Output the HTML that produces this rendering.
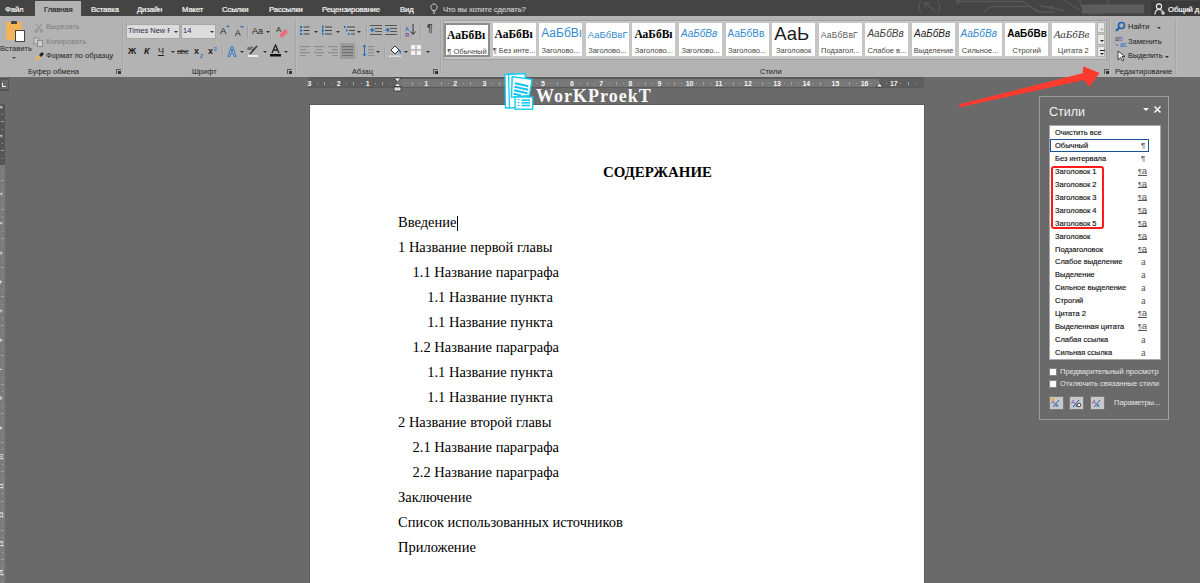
<!DOCTYPE html>
<html><head><meta charset="utf-8">
<style>
*{margin:0;padding:0;box-sizing:border-box}
html,body{width:1200px;height:583px;overflow:hidden}
body{position:relative;background:#6a6a6a;font-family:"Liberation Sans",sans-serif;color:#262626}
.a{position:absolute}
#tabs{left:0;top:0;width:1200px;height:16px;background:#444444}
.tab{position:absolute;top:5px;font-size:7.7px;line-height:10px;color:#fafafa;-webkit-text-stroke:0.2px currentColor;white-space:nowrap;letter-spacing:-0.1px}
#ribbon{left:0;top:16px;width:1200px;height:61px;background:#b3b3b3}
.sep{position:absolute;width:1px;background:#a6a6a6;box-shadow:1px 0 0 #bcbcbc}
.glabel{position:absolute;top:51px;font-size:8px;color:#303030;white-space:nowrap}
#page{left:310px;top:105px;width:614px;height:478px;background:#fff;box-shadow:0 0 0 1px #5c5c5c}
.t{position:absolute;font-size:7.5px;color:#1c1c1c;white-space:nowrap;line-height:10px}
.dd{position:absolute;width:0;height:0;border-left:2px solid transparent;border-right:2px solid transparent;border-top:2px solid #333}
.launch{position:absolute;top:53px;width:5px;height:5px;border-left:1px solid #555;border-top:1px solid #555}
.launch:after{content:"";position:absolute;left:1px;top:1px;width:3px;height:3px;background:#333}
.gi{position:absolute;top:7px;width:43px;height:33px;background:#fff;overflow:hidden}
.gs{position:absolute;left:2px;white-space:nowrap;line-height:12px}
.gl{position:absolute;left:0;top:23px;width:100%;text-align:center;font-size:7.5px;color:#444;white-space:nowrap;line-height:10px}
.sb{position:absolute;left:1097px;width:8px;height:11px;background:#e8e8e8;border:1px solid #b0b0b0}
.rn{position:absolute;top:79px;font-size:7px;font-weight:bold;color:#f4f4f4;line-height:10px;width:6px;text-align:center}
.pr{position:absolute;left:1055px;font-size:7.5px;color:#111;-webkit-text-stroke:0.15px #111;line-height:10px;white-space:nowrap}
.pi{position:absolute;font-size:8px;color:#555;line-height:10px;white-space:nowrap}
.pt{position:absolute;font-size:7.5px;color:#e6e6e6;line-height:10px;white-space:nowrap}
.doc{position:absolute;font-family:"Liberation Serif",serif;font-size:14.5px;color:#000;white-space:nowrap;line-height:1}
</style></head><body>
<div id="tabs" class="a">
  <div class="a" style="left:35px;top:1px;width:46px;height:15px;background:#b3b3b3"></div>
  <div class="tab" style="left:5px">Файл</div>
  <div class="tab" style="left:44px;color:#262626">Главная</div>
  <div class="tab" style="left:91px">Вставка</div>
  <div class="tab" style="left:137px">Дизайн</div>
  <div class="tab" style="left:182px">Макет</div>
  <div class="tab" style="left:222px">Ссылки</div>
  <div class="tab" style="left:269px">Рассылки</div>
  <div class="tab" style="left:322px">Рецензирование</div>
  <div class="tab" style="left:400px">Вид</div>
  <svg class="a" style="left:430px;top:3px" width="8" height="11" viewBox="0 0 8 11"><path d="M4 1 A3 3 0 0 1 6.5 5.8 L5.5 7.5 L2.5 7.5 L1.5 5.8 A3 3 0 0 1 4 1 Z" fill="none" stroke="#d8d8d8" stroke-width="0.9"/><path d="M2.7 9 L5.3 9 M3.2 10.3 L4.8 10.3" stroke="#d8d8d8" stroke-width="0.9"/></svg>
  <div class="tab" style="left:443px;color:#c8c8c8">Что вы хотите сделать?</div>
  <svg class="a" style="left:880px;top:0" width="280" height="16" viewBox="0 0 280 16"><g stroke="#575757" stroke-width="1.3" fill="none">
<path d="M41 1 A11 11 0 0 0 41 13"/><path d="M58 1 A11 11 0 0 1 58 13"/><path d="M45 3 L55 11 M45 3 L45 8 M45 3 L50 3"/>
<path d="M77 1.5 L143 1.5 L158 12 L175 12"/><circle cx="78" cy="1.5" r="1.6"/>
<path d="M104 12 L111 6.5 L150 6.5 L160 12"/>
<path d="M160 6 L171 7.5 L185 11"/><circle cx="171" cy="7.5" r="1.5"/>
<path d="M183 0 L200 10"/><path d="M200 0 A14 14 0 0 0 228 0"/>
</g><rect x="202" y="4.5" width="62" height="9" fill="#5c5c5c"/></svg>
<div class="a" style="left:1151px;top:1px;width:49px;height:15px;background:#3a3a3a"></div>
<svg class="a" style="left:1154px;top:3px" width="12" height="12" viewBox="0 0 12 12"><g stroke="#f2f2f2" stroke-width="1.1" fill="none"><circle cx="5" cy="3.5" r="2.6"/><path d="M0.8 11.5 Q1.5 6.5 5 6.5 Q7.5 6.5 8.5 8.5"/><path d="M9 8 L9 12 M7 10 L11 10"/></g></svg>
<div class="tab" style="left:1168px">Общий д</div>
</div>
<div id="ribbon" class="a">
 <!-- Clipboard -->
 <div class="a" style="left:6px;top:6px;width:16px;height:18px;background:#f2b45a;border-radius:1px"></div>
 <div class="a" style="left:11px;top:5px;width:6px;height:3px;background:#444;border-radius:1px 1px 0 0"></div>
 <div class="a" style="left:15px;top:14px;width:10px;height:12px;background:#fff;border:1px solid #444"></div>
 <div class="t" style="left:0px;top:28px;color:#262626">Вставить</div>
 <div class="a" style="left:12px;top:41px;width:0;height:0;border-left:2px solid transparent;border-right:2px solid transparent;border-top:2px solid #444"></div>
 <svg class="a" style="left:34px;top:7px" width="10" height="10" viewBox="0 0 10 10"><g stroke="#8c8c8c" fill="none" stroke-width="1"><line x1="2" y1="1" x2="7" y2="7"/><line x1="8" y1="1" x2="3" y2="7"/><circle cx="2.5" cy="8" r="1.3"/><circle cx="7.5" cy="8" r="1.3"/></g></svg>
 <div class="t" style="left:46px;top:6px;color:#7e7e7e">Вырезать</div>
 <svg class="a" style="left:33px;top:21px" width="11" height="10" viewBox="0 0 11 10"><g stroke="#8c8c8c" fill="#ccc" stroke-width="1"><rect x="1" y="1" width="5" height="6"/><rect x="4.5" y="3.5" width="5" height="6"/></g></svg>
 <div class="t" style="left:46px;top:21px;color:#7e7e7e">Копировать</div>
 <svg class="a" style="left:34px;top:35px" width="11" height="11" viewBox="0 0 11 11"><path d="M1 8 L5 4 L7 6 L3 10 Z" fill="#f2b45a"/><path d="M5 4 L8 1 L10 3 L7 6 Z" fill="#222"/></svg>
 <div class="t" style="left:46px;top:35px">Формат по образцу</div>
 <div class="t" style="left:28px;top:51px;color:#222">Буфер обмена</div>
 <div class="launch" style="left:116px"></div>
 <div class="sep" style="left:122px;top:3px;height:55px"></div>
 <!-- Font -->
 <div class="a" style="left:126px;top:8px;width:54px;height:15px;background:#dcdcdc;border:1px solid #a8a8a8"></div>
 <div class="a" style="left:127px;top:9px;width:43px;height:13px;overflow:hidden"><div class="t" style="left:1px;top:1px;color:#2a2a4a">Times New R</div></div>
 <div class="dd" style="left:174px;top:15px"></div>
 <div class="a" style="left:181px;top:8px;width:35px;height:15px;background:#dcdcdc;border:1px solid #a8a8a8"></div>
 <div class="t" style="left:183px;top:10px;color:#2a2a4a">14</div>
 <div class="dd" style="left:210px;top:15px"></div>
 <div class="t" style="left:220px;top:10px;font-size:9.5px;color:#222">A</div>
 <div class="a" style="left:226px;top:9px;border-left:2px solid transparent;border-right:2px solid transparent;border-bottom:2px solid #2e6fbf"></div>
 <div class="t" style="left:235px;top:12px;font-size:8.5px;color:#222">A</div>
 <div class="a" style="left:240px;top:10px;border-left:2px solid transparent;border-right:2px solid transparent;border-top:2px solid #2e6fbf"></div>
 <div class="sep" style="left:247px;top:9px;height:14px;background:#a3a3a3"></div>
 <div class="t" style="left:252px;top:10px;font-size:9px;color:#222">Aa</div>
 <div class="dd" style="left:266px;top:15px"></div>
 <div class="sep" style="left:270px;top:9px;height:14px;background:#a3a3a3"></div>
 <svg class="a" style="left:275px;top:8px" width="14" height="14" viewBox="0 0 14 14"><text x="1" y="8" font-size="8" font-family="Liberation Sans" fill="#333">A</text><path d="M4 11 L10 5 L13 8 L7 14 Z" fill="#ef6b7a"/></svg>
 <div class="t" style="left:128px;top:30px;font-size:9px;font-weight:bold;color:#1e1e1e">Ж</div>
 <div class="t" style="left:144px;top:30px;font-size:9px;font-style:italic;font-weight:bold;color:#1e1e1e">К</div>
 <div class="t" style="left:158px;top:30px;font-size:9px;color:#1e1e1e;text-decoration:underline">Ч</div>
 <div class="dd" style="left:171px;top:35px"></div>
 <div class="t" style="left:177px;top:31px;font-size:8px;color:#333;letter-spacing:-0.6px;text-decoration:line-through">abc</div>
 <div class="t" style="left:194px;top:30px;font-size:9px;font-weight:bold;color:#1e1e1e">x</div>
 <div class="t" style="left:200px;top:35px;font-size:5px;font-weight:bold;color:#2e6fbf">2</div>
 <div class="t" style="left:208px;top:30px;font-size:9px;font-weight:bold;color:#1e1e1e">x</div>
 <div class="t" style="left:214px;top:28px;font-size:5px;font-weight:bold;color:#2e6fbf">2</div>
 <div class="sep" style="left:222px;top:30px;height:13px;background:#a3a3a3"></div>
 <svg class="a" style="left:227px;top:30px" width="10" height="11" viewBox="0 0 10 11"><path d="M1 10.5 L4 0.8 L6 0.8 L9 10.5 L7.2 10.5 L6.3 7.5 L3.7 7.5 L2.8 10.5 Z M4.2 5.5 L5 2.8 L5.8 5.5 Z" stroke="#2e75c8" stroke-width="0.9" fill="none"/></svg>
 <div class="dd" style="left:240px;top:35px"></div>
 <svg class="a" style="left:247px;top:28px" width="12" height="13" viewBox="0 0 12 13"><text x="0" y="6" font-size="6" font-family="Liberation Sans" fill="#333">ab</text><path d="M3 10 L10 2" stroke="#333" stroke-width="1.5"/><rect x="1" y="11" width="10" height="2" fill="#eee"/></svg>
 <div class="dd" style="left:263px;top:35px"></div>
 <svg class="a" style="left:270px;top:28px" width="11" height="13" viewBox="0 0 11 13"><path d="M2 9 L5.5 1 L9 9 M3.5 6 L7.5 6" stroke="#222" stroke-width="1.3" fill="none"/><rect x="0" y="10" width="11" height="2.5" fill="#111"/></svg>
 <div class="dd" style="left:284px;top:35px"></div>
 <div class="t" style="left:192px;top:51px;color:#222">Шрифт</div>
 <div class="launch" style="left:287px"></div>
 <div class="sep" style="left:295px;top:3px;height:55px"></div>
 <!-- Paragraph -->
 <svg class="a" style="left:300px;top:9px" width="10" height="10" viewBox="0 0 10 10"><g fill="#1e6fc0"><rect x="0" y="1" width="2" height="2"/><rect x="0" y="4.5" width="2" height="2"/><rect x="0" y="8" width="2" height="2"/></g><g fill="#444"><rect x="3.5" y="1.5" width="6" height="1"/><rect x="3.5" y="5" width="6" height="1"/><rect x="3.5" y="8.5" width="6" height="1"/></g></svg>
 <div class="dd" style="left:314px;top:15px"></div>
 <svg class="a" style="left:322px;top:9px" width="10" height="10" viewBox="0 0 10 10"><g fill="#1e6fc0"><rect x="0" y="0.5" width="1.5" height="3"/><rect x="0" y="4" width="1.5" height="3"/><rect x="0" y="7.5" width="1.5" height="2.5"/></g><g fill="#444"><rect x="3" y="1.5" width="7" height="1"/><rect x="3" y="5" width="7" height="1"/><rect x="3" y="8.5" width="7" height="1"/></g></svg>
 <div class="dd" style="left:336px;top:15px"></div>
 <svg class="a" style="left:344px;top:9px" width="11" height="11" viewBox="0 0 11 11"><g fill="#1e6fc0"><rect x="0" y="1" width="1.5" height="2"/><rect x="2" y="4.5" width="1.5" height="2"/><rect x="4" y="8" width="1.5" height="2"/></g><g fill="#444"><rect x="3" y="1.5" width="8" height="1"/><rect x="5" y="5" width="6" height="1"/><rect x="7" y="8.5" width="4" height="1"/></g></svg>
 <div class="dd" style="left:357px;top:15px"></div>
 <div class="sep" style="left:366px;top:9px;height:14px;background:#a3a3a3"></div>
 <svg class="a" style="left:370px;top:9px" width="12" height="11" viewBox="0 0 12 11"><g fill="#555"><rect x="0" y="0" width="12" height="1"/><rect x="5" y="3" width="7" height="1"/><rect x="5" y="6" width="7" height="1"/><rect x="0" y="9" width="12" height="1"/></g><path d="M0 5 L3 2.5 L3 7.5 Z M3 4.5 L5 4.5 L5 5.5 L3 5.5Z" fill="#1e6fc0"/></svg>
 <svg class="a" style="left:385px;top:9px" width="12" height="11" viewBox="0 0 12 11"><g fill="#555"><rect x="0" y="0" width="12" height="1"/><rect x="5" y="3" width="7" height="1"/><rect x="5" y="6" width="7" height="1"/><rect x="0" y="9" width="12" height="1"/></g><path d="M5 5 L2 2.5 L2 7.5 Z M0 4.5 L2 4.5 L2 5.5 L0 5.5Z" fill="#1e6fc0"/></svg>
 <div class="sep" style="left:400px;top:9px;height:14px;background:#a3a3a3"></div>
 <div class="t" style="left:405px;top:8px;font-size:5.5px;font-weight:bold;color:#1e6fc0">А</div>
 <div class="t" style="left:405px;top:14px;font-size:5.5px;font-weight:bold;color:#8a3fb0">Я</div>
 <svg class="a" style="left:410px;top:8px" width="6" height="12" viewBox="0 0 6 12"><path d="M3 0 L3 10 M0.5 7.5 L3 10.5 L5.5 7.5" stroke="#333" stroke-width="1" fill="none"/></svg>
 <div class="sep" style="left:420px;top:9px;height:14px;background:#a3a3a3"></div>
 <div class="t" style="left:427px;top:8px;font-size:10px;font-weight:bold;color:#444">¶</div>
 <!-- row 2 -->
 <svg class="a" style="left:300px;top:30px" width="10" height="10" viewBox="0 0 10 10"><g fill="#8e8e8e"><rect x="0" y="0" width="10" height="1.2"/><rect x="0" y="3" width="6" height="1.2"/><rect x="0" y="6" width="10" height="1.2"/><rect x="0" y="9" width="6" height="1"/></g></svg>
 <svg class="a" style="left:314px;top:30px" width="10" height="10" viewBox="0 0 10 10"><g fill="#8e8e8e"><rect x="0" y="0" width="10" height="1.2"/><rect x="2" y="3" width="6" height="1.2"/><rect x="0" y="6" width="10" height="1.2"/><rect x="2" y="9" width="6" height="1"/></g></svg>
 <svg class="a" style="left:328px;top:30px" width="10" height="10" viewBox="0 0 10 10"><g fill="#8e8e8e"><rect x="0" y="0" width="10" height="1.2"/><rect x="4" y="3" width="6" height="1.2"/><rect x="0" y="6" width="10" height="1.2"/><rect x="4" y="9" width="6" height="1"/></g></svg>
 <div class="a" style="left:340px;top:27px;width:15px;height:16px;background:#9c9c9c"></div>
 <svg class="a" style="left:342px;top:30px" width="11" height="10" viewBox="0 0 11 10"><g fill="#6e6e6e"><rect x="0" y="0" width="11" height="1.2"/><rect x="0" y="3" width="11" height="1.2"/><rect x="0" y="6" width="11" height="1.2"/><rect x="0" y="9" width="11" height="1"/></g></svg>
 <div class="sep" style="left:357px;top:29px;height:14px;background:#a3a3a3"></div>
 <svg class="a" style="left:362px;top:28px" width="12" height="13" viewBox="0 0 12 13"><path d="M2.5 0.5 L0.5 3 L4.5 3 Z M2.5 12.5 L0.5 10 L4.5 10 Z" fill="#1e6fc0"/><rect x="2" y="3" width="1" height="7" fill="#1e6fc0"/><g fill="#8e8e8e"><rect x="6" y="2" width="6" height="1.2"/><rect x="6" y="5" width="6" height="1.2"/><rect x="6" y="8" width="6" height="1.2"/><rect x="6" y="11" width="6" height="1"/></g></svg>
 <div class="dd" style="left:376px;top:35px"></div>
 <div class="sep" style="left:384px;top:29px;height:14px;background:#a3a3a3"></div>
 <svg class="a" style="left:389px;top:28px" width="13" height="13" viewBox="0 0 13 13"><path d="M2 6 L6 2 L10 6 L6 10 Z" fill="#fff" stroke="#333" stroke-width="1"/><path d="M10 6 Q12 8 11 9" stroke="#1e6fc0" stroke-width="1.5" fill="none"/><rect x="0" y="11.5" width="12" height="1.5" fill="#ddd"/></svg>
 <div class="dd" style="left:404px;top:35px"></div>
 <svg class="a" style="left:411px;top:29px" width="10" height="10" viewBox="0 0 10 10"><rect x="0" y="0" width="10" height="10" fill="#f2f2f2"/><g fill="#9a9a9a"><rect x="4.5" y="0" width="1" height="10"/><rect x="0" y="4.5" width="10" height="1"/></g></svg>
 <div class="dd" style="left:426px;top:35px"></div>
 <div class="t" style="left:352px;top:51px;color:#222">Абзац</div>
 <div class="launch" style="left:433px"></div>
 <div class="sep" style="left:440px;top:3px;height:55px"></div>
 <!-- Styles gallery -->
 <div class="a" style="left:443px;top:4px;width:664px;height:40px;background:#c6c6c6;border:1px solid #a0a0a0"></div>
 <div class="gi" style="left:444.0px;top:7px;width:46px;height:34px;border:2px solid #8e8e8e"><div class="gs" style="font-family:'Liberation Serif';font-weight:bold;font-size:11.5px;color:#000;top:3.5px;left:1px">АаБбВı</div><div class="gl" style="top:22px">¶ Обычный</div></div>
 <div class="gi" style="left:492.6px"><div class="gs" style="font-family:'Liberation Serif';font-weight:bold;font-size:11.5px;color:#000;top:4.5px">АаБбВı</div><div class="gl">¶ Без инте...</div></div>
 <div class="gi" style="left:539.2px"><div class="gs" style="font-size:12px;color:#3489cf;top:3.5px">АаБбВı</div><div class="gl">Заголово...</div></div>
 <div class="gi" style="left:585.8px"><div class="gs" style="font-size:9.5px;color:#3489cf;top:5.5px">АаБбВвГ</div><div class="gl">Заголово...</div></div>
 <div class="gi" style="left:632.4px"><div class="gs" style="font-family:'Liberation Serif';font-weight:bold;font-size:11.5px;color:#000;top:4.5px">АаБбВı</div><div class="gl">Заголово...</div></div>
 <div class="gi" style="left:679.0px"><div class="gs" style="font-size:10px;font-style:italic;color:#3489cf;top:4.5px">АаБбВв</div><div class="gl">Заголово...</div></div>
 <div class="gi" style="left:725.6px"><div class="gs" style="font-size:10px;color:#3489cf;top:4.5px">АаБбВв</div><div class="gl">Заголово...</div></div>
 <div class="gi" style="left:772.2px"><div class="gs" style="font-size:18.5px;color:#1a1a1a;font-weight:normal;line-height:18px;top:1.5px">АаЬ</div><div class="gl">Заголовок</div></div>
 <div class="gi" style="left:818.8px"><div class="gs" style="font-size:8.5px;color:#5a5a5a;letter-spacing:0.2px;top:5.5px">АаБбВвГ</div><div class="gl">Подзагол...</div></div>
 <div class="gi" style="left:865.4px"><div class="gs" style="font-size:10px;font-style:italic;color:#404040;top:4.5px">АаБбВв</div><div class="gl">Слабое в...</div></div>
 <div class="gi" style="left:912.0px"><div class="gs" style="font-size:10px;font-style:italic;color:#1a1a1a;top:4.5px">АаБбВв</div><div class="gl">Выделение</div></div>
 <div class="gi" style="left:958.6px"><div class="gs" style="font-size:10px;font-style:italic;color:#3489cf;top:4.5px">АаБбВв</div><div class="gl">Сильное...</div></div>
 <div class="gi" style="left:1005.2px"><div class="gs" style="font-size:10px;font-weight:bold;color:#000;top:4.5px">АаБбВв</div><div class="gl">Строгий</div></div>
 <div class="gi" style="left:1051.8px"><div class="gs" style="font-family:'Liberation Serif';font-size:11px;font-style:italic;color:#404040;top:4.5px">АаБбВв</div><div class="gl">Цитата 2</div></div>
 <div class="a" style="left:1097px;top:6px;width:9px;height:37px;background:#c6c6c6"></div>
 <div class="sb" style="top:6px"><div class="a" style="left:2px;top:5px;border-left:2px solid transparent;border-right:2px solid transparent;border-bottom:2px solid #aaa"></div></div>
 <div class="sb" style="top:18px"><div class="a" style="left:2px;top:5px;border-left:2px solid transparent;border-right:2px solid transparent;border-top:2.5px solid #222"></div></div>
 <div class="sb" style="top:30px"><div class="a" style="left:2px;top:3px;width:5px;height:1px;background:#222"></div><div class="a" style="left:2px;top:6px;border-left:2.5px solid transparent;border-right:2.5px solid transparent;border-top:2.5px solid #222"></div></div>
 <div class="t" style="left:760px;top:51px;color:#222">Стили</div>
 <div class="launch" style="left:1104px"></div>
 <div class="sep" style="left:1109px;top:3px;height:55px"></div>
 <!-- Editing -->
 <svg class="a" style="left:1115px;top:5px" width="11" height="11" viewBox="0 0 11 11"><circle cx="6.5" cy="4.5" r="3" stroke="#1e5fb0" stroke-width="1.6" fill="none"/><path d="M4.5 6.5 L1 10" stroke="#1e5fb0" stroke-width="2"/></svg>
 <div class="t" style="left:1128px;top:6px">Найти</div>
 <div class="dd" style="left:1157px;top:11px"></div>
 <svg class="a" style="left:1115px;top:19px" width="13" height="13" viewBox="0 0 13 13"><text x="0" y="6" font-size="6.5" font-family="Liberation Sans" fill="#444">a</text><text x="4" y="5.5" font-size="6.5" font-family="Liberation Sans" fill="#7a3fb0">b</text><text x="5" y="12" font-size="6.5" font-family="Liberation Sans" fill="#1e6fc0">ac</text><path d="M1 9 L3 11" stroke="#1e6fc0" stroke-width="1"/></svg>
 <div class="t" style="left:1128px;top:21px">Заменить</div>
 <svg class="a" style="left:1117px;top:34px" width="9" height="12" viewBox="0 0 9 12"><path d="M1 1 L1 10 L3.5 7.5 L5.5 11 L7 10 L5 6.5 L8 6.5 Z" fill="#f4f4f4" stroke="#333" stroke-width="0.9"/></svg>
 <div class="t" style="left:1128px;top:35px">Выделить</div>
 <div class="dd" style="left:1165px;top:40px"></div>
 <div class="t" style="left:1115px;top:51px;color:#222">Редактирование</div>
 <div class="sep" style="left:1175px;top:3px;height:55px"></div>
</div>
<!-- tab selector & vertical ruler -->
<div class="a" style="left:0;top:78px;width:9px;height:13px;background:#555"></div>
<div class="a" style="left:1px;top:80px;width:7px;height:9px;background:#6a6a6a"></div>
<div class="a" style="left:2px;top:83px;width:1px;height:4px;background:#eee"></div>
<div class="a" style="left:2px;top:86px;width:4px;height:1px;background:#eee"></div>
<div class="a" style="left:0;top:104px;width:5px;height:61px;background:#555"></div>
<div class="a" style="left:0;top:165px;width:5px;height:418px;background:#7b7b7b"></div>
<div class="a" style="left:-2px;top:103.7px;font-size:6px;font-weight:bold;color:#e8e8e8;transform:rotate(-90deg);line-height:6px">2</div>
<div class="a" style="left:2px;top:114.0px;width:1px;height:1px;background:#a4a4a4"></div>
<div class="a" style="left:1px;top:121.2px;width:3px;height:1px;background:#a4a4a4"></div>
<div class="a" style="left:2px;top:128.5px;width:1px;height:1px;background:#a4a4a4"></div>
<div class="a" style="left:-2px;top:132.8px;font-size:6px;font-weight:bold;color:#e8e8e8;transform:rotate(-90deg);line-height:6px">1</div>
<div class="a" style="left:2px;top:143.1px;width:1px;height:1px;background:#a4a4a4"></div>
<div class="a" style="left:1px;top:150.4px;width:3px;height:1px;background:#a4a4a4"></div>
<div class="a" style="left:2px;top:157.7px;width:1px;height:1px;background:#a4a4a4"></div>
<div class="a" style="left:2px;top:172.3px;width:1px;height:1px;background:#a4a4a4"></div>
<div class="a" style="left:1px;top:179.6px;width:3px;height:1px;background:#a4a4a4"></div>
<div class="a" style="left:2px;top:186.9px;width:1px;height:1px;background:#a4a4a4"></div>
<div class="a" style="left:-2px;top:191.2px;font-size:6px;font-weight:bold;color:#e8e8e8;transform:rotate(-90deg);line-height:6px">1</div>
<div class="a" style="left:2px;top:201.5px;width:1px;height:1px;background:#a4a4a4"></div>
<div class="a" style="left:1px;top:208.8px;width:3px;height:1px;background:#a4a4a4"></div>
<div class="a" style="left:2px;top:216.0px;width:1px;height:1px;background:#a4a4a4"></div>
<div class="a" style="left:-2px;top:220.3px;font-size:6px;font-weight:bold;color:#e8e8e8;transform:rotate(-90deg);line-height:6px">2</div>
<div class="a" style="left:2px;top:230.6px;width:1px;height:1px;background:#a4a4a4"></div>
<div class="a" style="left:1px;top:237.9px;width:3px;height:1px;background:#a4a4a4"></div>
<div class="a" style="left:2px;top:245.2px;width:1px;height:1px;background:#a4a4a4"></div>
<div class="a" style="left:-2px;top:249.5px;font-size:6px;font-weight:bold;color:#e8e8e8;transform:rotate(-90deg);line-height:6px">3</div>
<div class="a" style="left:2px;top:259.8px;width:1px;height:1px;background:#a4a4a4"></div>
<div class="a" style="left:1px;top:267.1px;width:3px;height:1px;background:#a4a4a4"></div>
<div class="a" style="left:2px;top:274.4px;width:1px;height:1px;background:#a4a4a4"></div>
<div class="a" style="left:-2px;top:278.7px;font-size:6px;font-weight:bold;color:#e8e8e8;transform:rotate(-90deg);line-height:6px">4</div>
<div class="a" style="left:2px;top:289.0px;width:1px;height:1px;background:#a4a4a4"></div>
<div class="a" style="left:1px;top:296.3px;width:3px;height:1px;background:#a4a4a4"></div>
<div class="a" style="left:2px;top:303.6px;width:1px;height:1px;background:#a4a4a4"></div>
<div class="a" style="left:-2px;top:307.9px;font-size:6px;font-weight:bold;color:#e8e8e8;transform:rotate(-90deg);line-height:6px">5</div>
<div class="a" style="left:2px;top:318.1px;width:1px;height:1px;background:#a4a4a4"></div>
<div class="a" style="left:1px;top:325.4px;width:3px;height:1px;background:#a4a4a4"></div>
<div class="a" style="left:2px;top:332.7px;width:1px;height:1px;background:#a4a4a4"></div>
<div class="a" style="left:-2px;top:337.0px;font-size:6px;font-weight:bold;color:#e8e8e8;transform:rotate(-90deg);line-height:6px">6</div>
<div class="a" style="left:2px;top:347.3px;width:1px;height:1px;background:#a4a4a4"></div>
<div class="a" style="left:1px;top:354.6px;width:3px;height:1px;background:#a4a4a4"></div>
<div class="a" style="left:2px;top:361.9px;width:1px;height:1px;background:#a4a4a4"></div>
<div class="a" style="left:-2px;top:366.2px;font-size:6px;font-weight:bold;color:#e8e8e8;transform:rotate(-90deg);line-height:6px">7</div>
<div class="a" style="left:2px;top:376.5px;width:1px;height:1px;background:#a4a4a4"></div>
<div class="a" style="left:1px;top:383.8px;width:3px;height:1px;background:#a4a4a4"></div>
<div class="a" style="left:2px;top:391.1px;width:1px;height:1px;background:#a4a4a4"></div>
<div class="a" style="left:-2px;top:395.4px;font-size:6px;font-weight:bold;color:#e8e8e8;transform:rotate(-90deg);line-height:6px">8</div>
<div class="a" style="left:2px;top:405.7px;width:1px;height:1px;background:#a4a4a4"></div>
<div class="a" style="left:1px;top:412.9px;width:3px;height:1px;background:#a4a4a4"></div>
<div class="a" style="left:2px;top:420.2px;width:1px;height:1px;background:#a4a4a4"></div>
<div class="a" style="left:-2px;top:424.5px;font-size:6px;font-weight:bold;color:#e8e8e8;transform:rotate(-90deg);line-height:6px">9</div>
<div class="a" style="left:2px;top:434.8px;width:1px;height:1px;background:#a4a4a4"></div>
<div class="a" style="left:1px;top:442.1px;width:3px;height:1px;background:#a4a4a4"></div>
<div class="a" style="left:2px;top:449.4px;width:1px;height:1px;background:#a4a4a4"></div>
<div class="a" style="left:-2px;top:453.7px;font-size:6px;font-weight:bold;color:#e8e8e8;transform:rotate(-90deg);line-height:6px">10</div>
<div class="a" style="left:2px;top:464.0px;width:1px;height:1px;background:#a4a4a4"></div>
<div class="a" style="left:1px;top:471.3px;width:3px;height:1px;background:#a4a4a4"></div>
<div class="a" style="left:2px;top:478.6px;width:1px;height:1px;background:#a4a4a4"></div>
<div class="a" style="left:-2px;top:482.9px;font-size:6px;font-weight:bold;color:#e8e8e8;transform:rotate(-90deg);line-height:6px">11</div>
<div class="a" style="left:2px;top:493.2px;width:1px;height:1px;background:#a4a4a4"></div>
<div class="a" style="left:1px;top:500.5px;width:3px;height:1px;background:#a4a4a4"></div>
<div class="a" style="left:2px;top:507.7px;width:1px;height:1px;background:#a4a4a4"></div>
<div class="a" style="left:-2px;top:512.0px;font-size:6px;font-weight:bold;color:#e8e8e8;transform:rotate(-90deg);line-height:6px">12</div>
<div class="a" style="left:2px;top:522.3px;width:1px;height:1px;background:#a4a4a4"></div>
<div class="a" style="left:1px;top:529.6px;width:3px;height:1px;background:#a4a4a4"></div>
<div class="a" style="left:2px;top:536.9px;width:1px;height:1px;background:#a4a4a4"></div>
<div class="a" style="left:-2px;top:541.2px;font-size:6px;font-weight:bold;color:#e8e8e8;transform:rotate(-90deg);line-height:6px">13</div>
<div class="a" style="left:2px;top:551.5px;width:1px;height:1px;background:#a4a4a4"></div>
<div class="a" style="left:1px;top:558.8px;width:3px;height:1px;background:#a4a4a4"></div>
<div class="a" style="left:2px;top:566.1px;width:1px;height:1px;background:#a4a4a4"></div>
<div class="a" style="left:-2px;top:570.4px;font-size:6px;font-weight:bold;color:#e8e8e8;transform:rotate(-90deg);line-height:6px">14</div>
<div class="a" style="left:2px;top:580.7px;width:1px;height:1px;background:#a4a4a4"></div>
<!-- horizontal ruler -->
<div class="a" style="left:308px;top:77px;width:616px;height:11px;background:#5a5a5a"></div>
<div class="a" style="left:308px;top:79px;width:616px;height:8px;background:#5e5e5e"></div>
<div class="a" style="left:397px;top:79px;width:482px;height:8px;background:#777777"></div>
<div class="rn" style="left:306.5px">3</div>
<div class="rn" style="left:335.7px">2</div>
<div class="rn" style="left:364.8px">1</div>
<div class="rn" style="left:423.2px">1</div>
<div class="rn" style="left:452.3px">2</div>
<div class="rn" style="left:481.5px">3</div>
<div class="rn" style="left:510.7px">4</div>
<div class="rn" style="left:539.9px">5</div>
<div class="rn" style="left:569.0px">6</div>
<div class="rn" style="left:598.2px">7</div>
<div class="rn" style="left:627.4px">8</div>
<div class="rn" style="left:656.5px">9</div>
<div class="rn" style="left:685.7px">10</div>
<div class="rn" style="left:714.9px">11</div>
<div class="rn" style="left:744.0px">12</div>
<div class="rn" style="left:773.2px">13</div>
<div class="rn" style="left:802.4px">14</div>
<div class="rn" style="left:831.5px">15</div>
<div class="rn" style="left:860.7px">16</div>
<div class="rn" style="left:889.9px">17</div>
<div class="a" style="left:316.8px;top:83px;width:1px;height:1px;background:#a4a4a4"></div>
<div class="a" style="left:324.1px;top:82px;width:1px;height:3px;background:#a4a4a4"></div>
<div class="a" style="left:331.4px;top:83px;width:1px;height:1px;background:#a4a4a4"></div>
<div class="a" style="left:346.0px;top:83px;width:1px;height:1px;background:#a4a4a4"></div>
<div class="a" style="left:353.2px;top:82px;width:1px;height:3px;background:#a4a4a4"></div>
<div class="a" style="left:360.5px;top:83px;width:1px;height:1px;background:#a4a4a4"></div>
<div class="a" style="left:375.1px;top:83px;width:1px;height:1px;background:#a4a4a4"></div>
<div class="a" style="left:382.4px;top:82px;width:1px;height:3px;background:#a4a4a4"></div>
<div class="a" style="left:389.7px;top:83px;width:1px;height:1px;background:#a4a4a4"></div>
<div class="a" style="left:404.3px;top:83px;width:1px;height:1px;background:#a4a4a4"></div>
<div class="a" style="left:411.6px;top:82px;width:1px;height:3px;background:#a4a4a4"></div>
<div class="a" style="left:418.9px;top:83px;width:1px;height:1px;background:#a4a4a4"></div>
<div class="a" style="left:433.5px;top:83px;width:1px;height:1px;background:#a4a4a4"></div>
<div class="a" style="left:440.8px;top:82px;width:1px;height:3px;background:#a4a4a4"></div>
<div class="a" style="left:448.0px;top:83px;width:1px;height:1px;background:#a4a4a4"></div>
<div class="a" style="left:462.6px;top:83px;width:1px;height:1px;background:#a4a4a4"></div>
<div class="a" style="left:469.9px;top:82px;width:1px;height:3px;background:#a4a4a4"></div>
<div class="a" style="left:477.2px;top:83px;width:1px;height:1px;background:#a4a4a4"></div>
<div class="a" style="left:491.8px;top:83px;width:1px;height:1px;background:#a4a4a4"></div>
<div class="a" style="left:499.1px;top:82px;width:1px;height:3px;background:#a4a4a4"></div>
<div class="a" style="left:506.4px;top:83px;width:1px;height:1px;background:#a4a4a4"></div>
<div class="a" style="left:521.0px;top:83px;width:1px;height:1px;background:#a4a4a4"></div>
<div class="a" style="left:528.3px;top:82px;width:1px;height:3px;background:#a4a4a4"></div>
<div class="a" style="left:535.6px;top:83px;width:1px;height:1px;background:#a4a4a4"></div>
<div class="a" style="left:550.1px;top:83px;width:1px;height:1px;background:#a4a4a4"></div>
<div class="a" style="left:557.4px;top:82px;width:1px;height:3px;background:#a4a4a4"></div>
<div class="a" style="left:564.7px;top:83px;width:1px;height:1px;background:#a4a4a4"></div>
<div class="a" style="left:579.3px;top:83px;width:1px;height:1px;background:#a4a4a4"></div>
<div class="a" style="left:586.6px;top:82px;width:1px;height:3px;background:#a4a4a4"></div>
<div class="a" style="left:593.9px;top:83px;width:1px;height:1px;background:#a4a4a4"></div>
<div class="a" style="left:608.5px;top:83px;width:1px;height:1px;background:#a4a4a4"></div>
<div class="a" style="left:615.8px;top:82px;width:1px;height:3px;background:#a4a4a4"></div>
<div class="a" style="left:623.1px;top:83px;width:1px;height:1px;background:#a4a4a4"></div>
<div class="a" style="left:637.7px;top:83px;width:1px;height:1px;background:#a4a4a4"></div>
<div class="a" style="left:644.9px;top:82px;width:1px;height:3px;background:#a4a4a4"></div>
<div class="a" style="left:652.2px;top:83px;width:1px;height:1px;background:#a4a4a4"></div>
<div class="a" style="left:666.8px;top:83px;width:1px;height:1px;background:#a4a4a4"></div>
<div class="a" style="left:674.1px;top:82px;width:1px;height:3px;background:#a4a4a4"></div>
<div class="a" style="left:681.4px;top:83px;width:1px;height:1px;background:#a4a4a4"></div>
<div class="a" style="left:696.0px;top:83px;width:1px;height:1px;background:#a4a4a4"></div>
<div class="a" style="left:703.3px;top:82px;width:1px;height:3px;background:#a4a4a4"></div>
<div class="a" style="left:710.6px;top:83px;width:1px;height:1px;background:#a4a4a4"></div>
<div class="a" style="left:725.2px;top:83px;width:1px;height:1px;background:#a4a4a4"></div>
<div class="a" style="left:732.5px;top:82px;width:1px;height:3px;background:#a4a4a4"></div>
<div class="a" style="left:739.7px;top:83px;width:1px;height:1px;background:#a4a4a4"></div>
<div class="a" style="left:754.3px;top:83px;width:1px;height:1px;background:#a4a4a4"></div>
<div class="a" style="left:761.6px;top:82px;width:1px;height:3px;background:#a4a4a4"></div>
<div class="a" style="left:768.9px;top:83px;width:1px;height:1px;background:#a4a4a4"></div>
<div class="a" style="left:783.5px;top:83px;width:1px;height:1px;background:#a4a4a4"></div>
<div class="a" style="left:790.8px;top:82px;width:1px;height:3px;background:#a4a4a4"></div>
<div class="a" style="left:798.1px;top:83px;width:1px;height:1px;background:#a4a4a4"></div>
<div class="a" style="left:812.7px;top:83px;width:1px;height:1px;background:#a4a4a4"></div>
<div class="a" style="left:820.0px;top:82px;width:1px;height:3px;background:#a4a4a4"></div>
<div class="a" style="left:827.3px;top:83px;width:1px;height:1px;background:#a4a4a4"></div>
<div class="a" style="left:841.8px;top:83px;width:1px;height:1px;background:#a4a4a4"></div>
<div class="a" style="left:849.1px;top:82px;width:1px;height:3px;background:#a4a4a4"></div>
<div class="a" style="left:856.4px;top:83px;width:1px;height:1px;background:#a4a4a4"></div>
<div class="a" style="left:871.0px;top:83px;width:1px;height:1px;background:#a4a4a4"></div>
<div class="a" style="left:878.3px;top:82px;width:1px;height:3px;background:#a4a4a4"></div>
<div class="a" style="left:885.6px;top:83px;width:1px;height:1px;background:#a4a4a4"></div>
<div class="a" style="left:900.2px;top:83px;width:1px;height:1px;background:#a4a4a4"></div>
<div class="a" style="left:907.5px;top:82px;width:1px;height:3px;background:#a4a4a4"></div>
<div class="a" style="left:914.8px;top:83px;width:1px;height:1px;background:#a4a4a4"></div>
<svg class="a" style="left:392px;top:77px" width="11" height="15" viewBox="0 0 11 15"><path d="M2 1 L9 1 L5.5 5 Z" fill="#eee" stroke="#333" stroke-width="0.8"/><path d="M5.5 6 L9 9.5 L2 9.5 Z" fill="#eee" stroke="#333" stroke-width="0.8"/><rect x="2" y="10" width="7" height="4" fill="#ddd" stroke="#333" stroke-width="0.8"/></svg>
<svg class="a" style="left:874px;top:82px" width="11" height="8" viewBox="0 0 11 8"><path d="M5.5 1 L9 5 L2 5 Z" fill="#eee" stroke="#333" stroke-width="0.8"/></svg>
<!-- page -->
<div id="page" class="a">
 <div class="doc" style="left:293px;top:60px;font-weight:bold;font-size:14.9px">СОДЕРЖАНИЕ</div>
 <div class="doc" style="left:88.0px;top:110px">Введение</div>
 <div class="doc" style="left:88.0px;top:135px">1 Название первой главы</div>
 <div class="doc" style="left:102.6px;top:160px">1.1 Название параграфа</div>
 <div class="doc" style="left:117.2px;top:185px">1.1 Название пункта</div>
 <div class="doc" style="left:117.2px;top:210px">1.1 Название пункта</div>
 <div class="doc" style="left:102.6px;top:235px">1.2 Название параграфа</div>
 <div class="doc" style="left:117.2px;top:260px">1.1 Название пункта</div>
 <div class="doc" style="left:117.2px;top:285px">1.1 Название пункта</div>
 <div class="doc" style="left:88.0px;top:310px">2 Название второй главы</div>
 <div class="doc" style="left:102.6px;top:335px">2.1 Название параграфа</div>
 <div class="doc" style="left:102.6px;top:360px">2.2 Название параграфа</div>
 <div class="doc" style="left:88.0px;top:385px">Заключение</div>
 <div class="doc" style="left:88.0px;top:410px">Список использованных источников</div>
 <div class="doc" style="left:88.0px;top:435px">Приложение</div>
 <div class="a" style="left:147px;top:111px;width:1px;height:15px;background:#000"></div>
</div>
<div class="a" style="left:1039px;top:96px;width:130px;height:324px;border:1px solid #9a9a9a;border-right-color:#a4a4a4"></div>
<div class="a" style="left:1049px;top:104px;font-size:12.5px;color:#f2f2f2;line-height:16px;white-space:nowrap">Стили</div>
<div class="a" style="left:1143px;top:107.5px;border-left:3px solid transparent;border-right:3px solid transparent;border-top:3px solid #f4f4f4"></div>
<svg class="a" style="left:1153px;top:105px" width="9" height="9" viewBox="0 0 9 9"><path d="M1.5 1.5 L7.5 7.5 M7.5 1.5 L1.5 7.5" stroke="#f4f4f4" stroke-width="1.6"/></svg>
<div class="a" style="left:1049px;top:125px;width:112px;height:235px;background:#fff;border:1px solid #a8a8a8"></div>
<div class="a" style="left:1050px;top:139px;width:99px;height:13px;border:1.6px solid #1a5298"></div>
<div class="a" style="left:1051px;top:166px;width:53px;height:63px;border:2px solid #ff1a1a;border-radius:3px"></div>
<div class="pr" style="top:128.2px">Очистить все</div>
<div class="pr" style="top:141.1px">Обычный</div>
<div class="pi" style="top:141.1px;left:1141px">¶</div>
<div class="pr" style="top:154.0px">Без интервала</div>
<div class="pi" style="top:154.0px;left:1141px">¶</div>
<div class="pr" style="top:167.0px">Заголовок 1</div>
<div class="pi" style="top:165.0px;left:1138px;font-size:7px;line-height:11px">¶<span style="font-size:9.5px">a</span></div><div class="a" style="left:1138px;top:174.5px;width:9px;height:1px;background:#555"></div>
<div class="pr" style="top:179.9px">Заголовок 2</div>
<div class="pi" style="top:177.9px;left:1138px;font-size:7px;line-height:11px">¶<span style="font-size:9.5px">a</span></div><div class="a" style="left:1138px;top:187.4px;width:9px;height:1px;background:#555"></div>
<div class="pr" style="top:192.8px">Заголовок 3</div>
<div class="pi" style="top:190.8px;left:1138px;font-size:7px;line-height:11px">¶<span style="font-size:9.5px">a</span></div><div class="a" style="left:1138px;top:200.3px;width:9px;height:1px;background:#555"></div>
<div class="pr" style="top:205.7px">Заголовок 4</div>
<div class="pi" style="top:203.7px;left:1138px;font-size:7px;line-height:11px">¶<span style="font-size:9.5px">a</span></div><div class="a" style="left:1138px;top:213.2px;width:9px;height:1px;background:#555"></div>
<div class="pr" style="top:218.6px">Заголовок 5</div>
<div class="pi" style="top:216.6px;left:1138px;font-size:7px;line-height:11px">¶<span style="font-size:9.5px">a</span></div><div class="a" style="left:1138px;top:226.1px;width:9px;height:1px;background:#555"></div>
<div class="pr" style="top:231.6px">Заголовок</div>
<div class="pi" style="top:229.6px;left:1138px;font-size:7px;line-height:11px">¶<span style="font-size:9.5px">a</span></div><div class="a" style="left:1138px;top:239.1px;width:9px;height:1px;background:#555"></div>
<div class="pr" style="top:244.5px">Подзаголовок</div>
<div class="pi" style="top:242.5px;left:1138px;font-size:7px;line-height:11px">¶<span style="font-size:9.5px">a</span></div><div class="a" style="left:1138px;top:252.0px;width:9px;height:1px;background:#555"></div>
<div class="pr" style="top:257.4px">Слабое выделение</div>
<div class="pi" style="top:256.4px;left:1141px;font-size:10.5px;line-height:11px;font-family:'Liberation Serif'">a</div>
<div class="pr" style="top:270.3px">Выделение</div>
<div class="pi" style="top:269.3px;left:1141px;font-size:10.5px;line-height:11px;font-family:'Liberation Serif'">a</div>
<div class="pr" style="top:283.2px">Сильное выделение</div>
<div class="pi" style="top:282.2px;left:1141px;font-size:10.5px;line-height:11px;font-family:'Liberation Serif'">a</div>
<div class="pr" style="top:296.2px">Строгий</div>
<div class="pi" style="top:295.2px;left:1141px;font-size:10.5px;line-height:11px;font-family:'Liberation Serif'">a</div>
<div class="pr" style="top:309.1px">Цитата 2</div>
<div class="pi" style="top:307.1px;left:1138px;font-size:7px;line-height:11px">¶<span style="font-size:9.5px">a</span></div><div class="a" style="left:1138px;top:316.6px;width:9px;height:1px;background:#555"></div>
<div class="pr" style="top:322.0px">Выделенная цитата</div>
<div class="pi" style="top:320.0px;left:1138px;font-size:7px;line-height:11px">¶<span style="font-size:9.5px">a</span></div><div class="a" style="left:1138px;top:329.5px;width:9px;height:1px;background:#555"></div>
<div class="pr" style="top:334.9px">Слабая ссылка</div>
<div class="pi" style="top:333.9px;left:1141px;font-size:10.5px;line-height:11px;font-family:'Liberation Serif'">a</div>
<div class="pr" style="top:347.8px">Сильная ссылка</div>
<div class="pi" style="top:346.8px;left:1141px;font-size:10.5px;line-height:11px;font-family:'Liberation Serif'">a</div>
<div class="a" style="left:1049px;top:368px;width:8px;height:8px;background:#fafafa;border:1px solid #888"></div>
<div class="a" style="left:1049px;top:380px;width:8px;height:8px;background:#fafafa;border:1px solid #888"></div>
<div class="pt" style="left:1060px;top:367px">Предварительный просмотр</div>
<div class="pt" style="left:1060px;top:379px">Отключить связанные стили</div>
<div class="a" style="left:1049px;top:396px;width:15px;height:14px;background:#c8c8c8;border:1px solid #7a7a7a"></div>
<svg class="a" style="left:1051px;top:398px" width="11" height="10" viewBox="0 0 11 10"><text x="0" y="6" font-size="6" font-family="Liberation Sans" fill="#7a3fb0">A</text><text x="4" y="9" font-size="6" font-family="Liberation Sans" fill="#1e5fb0">a</text><path d="M2 9 L8 2" stroke="#1e5fb0" stroke-width="1"/><rect x="0" y="0" width="3" height="3" fill="#f0b040"/></svg>
<div class="a" style="left:1069px;top:396px;width:15px;height:14px;background:#c8c8c8;border:1px solid #7a7a7a"></div>
<svg class="a" style="left:1071px;top:398px" width="11" height="10" viewBox="0 0 11 10"><text x="0" y="6" font-size="6" font-family="Liberation Sans" fill="#7a3fb0">A</text><text x="4" y="9" font-size="6" font-family="Liberation Sans" fill="#1e5fb0">a</text><path d="M2 9 L8 2" stroke="#1e5fb0" stroke-width="1"/><circle cx="8" cy="7" r="1.8" fill="#fff" stroke="#222" stroke-width="0.8"/></svg>
<div class="a" style="left:1090px;top:396px;width:15px;height:14px;background:#c8c8c8;border:1px solid #7a7a7a"></div>
<svg class="a" style="left:1092px;top:398px" width="11" height="10" viewBox="0 0 11 10"><text x="0" y="6" font-size="6" font-family="Liberation Sans" fill="#7a3fb0">A</text><text x="4" y="9" font-size="6" font-family="Liberation Sans" fill="#1e5fb0">a</text><path d="M2 9 L8 2" stroke="#1e5fb0" stroke-width="1"/></svg>
<div class="pt" style="left:1114px;top:398px">Параметры...</div><svg class="a" style="left:0;top:0" width="1200" height="583" viewBox="0 0 1200 583">
 <path d="M960.4 103.9 L1082.6 73.3 L1083.3 66.3 L1099.6 73 L1089.3 87 L1084.2 80.1 L961 106.9 Z" fill="#ff3a2e"/>
 <circle cx="960.8" cy="105.4" r="1.6" fill="#ff3a2e"/>
</svg>
<svg class="a" style="left:503px;top:72px" width="32" height="39" viewBox="0 0 32 39">
 <path d="M2 2.5 L10 2 L11 35.5 L2.5 36 Z" fill="#fff" stroke="#14cdf4" stroke-width="1.3"/>
 <path d="M5.5 2.5 L22 1.5 L24 35 L6.5 36 Z" fill="#fff" stroke="#14cdf4" stroke-width="1.3"/>
 <path d="M9.2 4.8 L29 7.4 L26.5 23.5 L8.5 25.3 Z" fill="#fff" stroke="#14cdf4" stroke-width="1.4"/>
 <g stroke="#14bff0" stroke-width="1.9"><path d="M12 11.3 L25.4 14.2"/><path d="M11.5 14.8 L25 17.7"/><path d="M11 18.3 L24.5 21.2"/><path d="M10.5 21.8 L18 23.4"/></g>
 <rect x="12.1" y="25" width="17.6" height="12.2" fill="#fff" stroke="#14cdf4" stroke-width="1.4"/>
 <g stroke="#14c4f2" stroke-width="1.6"><path d="M18.5 28.2 L27 28.2"/><path d="M18.5 30.8 L27 30.8"/><path d="M18.5 33.5 L27 33.5"/></g>
 <g stroke="#14cdf4" stroke-width="1"><path d="M14.5 27.5 L16.5 27.5 M14.5 30.5 L16.5 30.5 M14.5 33.5 L16.5 33.5"/></g>
</svg>
<div class="a" style="left:536px;top:85.5px;font-family:'Liberation Serif',serif;font-weight:bold;font-size:18px;letter-spacing:1px;color:#f8f8f8;line-height:20px;white-space:nowrap">WorKProekT</div>


</body></html>
